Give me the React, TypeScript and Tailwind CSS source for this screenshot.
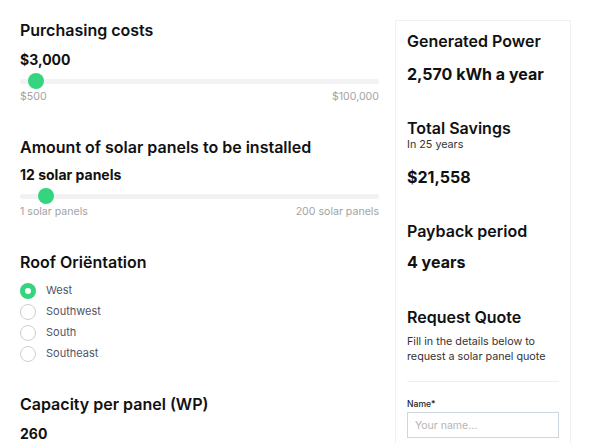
import { useState } from 'react';

const font = { fontFamily: 'Inter, "Liberation Sans", sans-serif' };

type RangeProps = {
  value: string;
  pos: number;
  min: string;
  max: string;
  gap?: string;
};

const Range = ({ value, pos, min, max, gap = 'mt-[6px]' }: RangeProps) => (
  <div>
    <p className={`${gap} text-[14px] leading-5 font-bold text-[#111]`}>{value}</p>
    <div className="relative mt-[3px] flex h-4 items-center">
      <div className="h-[5px] w-full rounded-full bg-[#f2f2f2]" />
      <div
        className="absolute top-0 h-4 w-4 rounded-full bg-[#35d47e]"
        style={{ left: pos }}
      />
    </div>
    <div className="mt-[1px] flex justify-between text-[10.6px] leading-[14px] text-[#a3a3a3]">
      <span>{min}</span>
      <span>{max}</span>
    </div>
  </div>
);

const orientations = ['West', 'Southwest', 'South', 'Southeast'];

type StatProps = { title: string; sub?: string; value: string; gap: string };

const Stat = ({ title, sub, value, gap }: StatProps) => (
  <div>
    <h3 className={`text-[16px] font-semibold text-[#111] ${sub ? 'leading-5' : 'leading-6'}`}>
      {title}
    </h3>
    {sub && <p className="text-[10.75px] leading-[14px] text-[#333]">{sub}</p>}
    <p className={`${gap} text-[16px] leading-6 font-bold text-[#111]`}>{value}</p>
  </div>
);

export default function App() {
  const [roof, setRoof] = useState('West');

  return (
    <div className="flex gap-4 bg-white pr-[19px] pl-5" style={font}>
      <div className="w-[359px] pt-[18px]">
        <section>
          <h2 className="text-[16px] leading-6 font-semibold text-[#111]">Purchasing costs</h2>
          <Range value="$3,000" pos={8} min="$500" max="$100,000" gap="mt-[8px]" />
        </section>

        <section className="mt-[31px]">
          <h2 className="text-[16px] leading-6 font-semibold text-[#111]">
            Amount of solar panels to be installed
          </h2>
          <Range value="12 solar panels" pos={18} min="1 solar panels" max="200 solar panels" />
        </section>

        <section className="mt-[31px]">
          <h2 className="text-[16px] leading-6 font-semibold text-[#111]">Roof Oriëntation</h2>
          <div className="mt-[6px] flex flex-col">
            {orientations.map(o => (
              <label key={o} className="flex h-[21px] cursor-pointer items-center gap-[10px]">
                <input
                  type="radio"
                  name="roof"
                  className="sr-only"
                  checked={roof === o}
                  onChange={() => setRoof(o)}
                />
                {roof === o ? (
                  <span className="flex h-4 w-4 items-center justify-center rounded-full bg-[#35d47e]">
                    <span className="h-[6px] w-[6px] rounded-full bg-white" />
                  </span>
                ) : (
                  <span className="h-4 w-4 rounded-full border border-[#cfcfcf] bg-white" />
                )}
                <span className="text-[11px] text-[#4f5567]">{o}</span>
              </label>
            ))}
          </div>
        </section>

        <section className="mt-7">
          <h2 className="text-[16px] leading-6 font-semibold text-[#111]">Capacity per panel (WP)</h2>
          <p className="mt-[8px] text-[14px] leading-5 font-bold text-[#111]">260</p>
        </section>
      </div>

      <aside className="mt-5 h-[460px] w-[176px] border border-[#f0f0f0] px-[11px] pt-2">
        <Stat title="Generated Power" value="2,570 kWh a year" gap="mt-[9px]" />
        <div className="mt-[32px]">
          <Stat title="Total Savings" sub="In 25 years" value="$21,558" gap="mt-[13px]" />
        </div>
        <div className="mt-[30px]">
          <Stat title="Payback period" value="4 years" gap="mt-[7px]" />
        </div>
        <div className="mt-[31px]">
          <h3 className="text-[16px] leading-6 font-semibold text-[#111]">Request Quote</h3>
          <p className="mt-[5px] text-[10.75px] leading-[15px] text-[#333]">
            Fill in the details below to request a solar panel quote
          </p>
        </div>
        <hr className="mt-[17px] border-[#f0f0f0]" />
        <label className="mt-[16px] block text-[8.6px] leading-3 font-medium text-[#222]">Name*</label>
        <input
          type="text"
          placeholder="Your name..."
          className="mt-[2px] h-[26px] w-full border border-[#cdd6e2] px-[7px] text-[10.5px] placeholder:text-[#b5b5b5] outline-none"
        />
      </aside>
    </div>
  );
}
